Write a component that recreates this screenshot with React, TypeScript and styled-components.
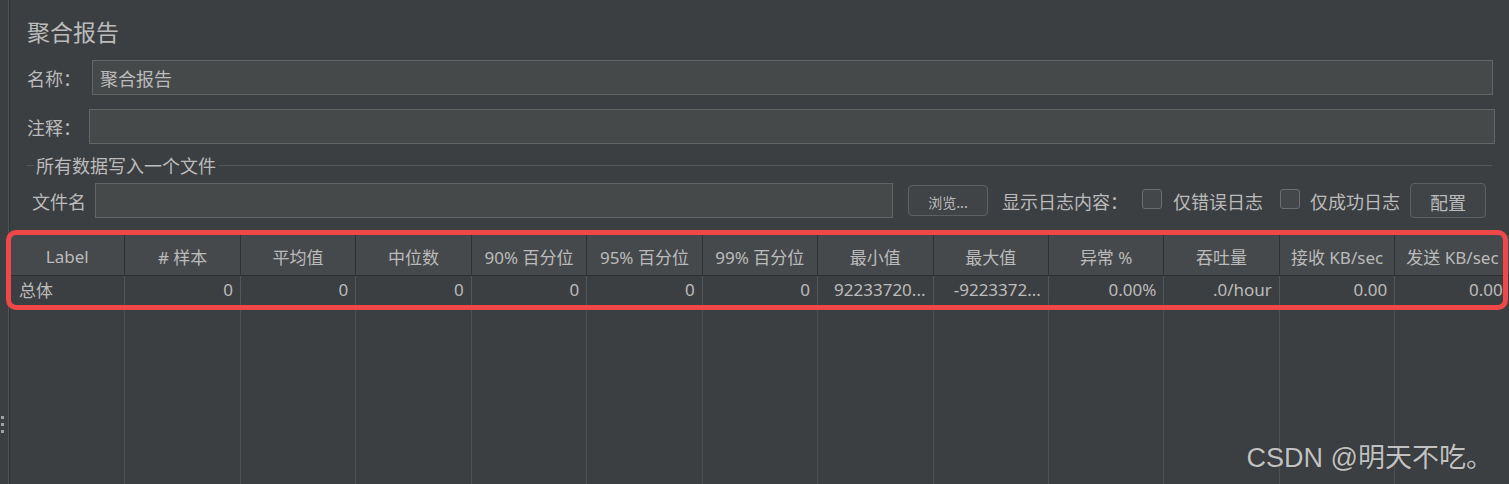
import React from "react";
import styled, { createGlobalStyle } from "styled-components";

const GlobalStyle = createGlobalStyle`
  html, body, #root {
    margin: 0;
    height: 100%;
  }
  body {
    background: #3c3f41;
    overflow: hidden;
    font-family: "Noto Sans", "Noto Sans CJK SC", sans-serif;
  }
`;

const Page = styled.div`
  display: flex;
  height: 100vh;
  width: 100vw;
  background: #3c3f41;
  color: #bbbbbb;
  overflow: hidden;
`;

const SideStrip = styled.div`
  position: relative;
  width: 8px;
  flex: 0 0 8px;
  background: #3c3f41;
  border-right: 1px solid #505356;
`;

const Grip = styled.div`
  position: absolute;
  left: 1px;
  top: 416px;
  display: flex;
  flex-direction: column;
  gap: 4px;
  span {
    width: 3px;
    height: 3px;
    background: #a0a0a0;
  }
`;

const Main = styled.div`
  position: relative;
  flex: 1;
  display: flex;
  flex-direction: column;
  min-width: 0;
  border-left: 1px solid #333537;
`;

const Form = styled.div`
  display: flex;
  flex-direction: column;
  padding: 0 16px 0 17px;
`;

const Title = styled.div`
  margin-top: 15px;
  font-size: 23px;
  line-height: 32px;
  font-family: "Noto Sans CJK SC", sans-serif;
`;

const FieldRow = styled.div<{ $top: number; $labelWidth: number; $right?: number }>`
  display: flex;
  align-items: center;
  margin-top: ${(p) => p.$top}px;
  margin-right: ${(p) => p.$right ?? 0}px;
  label {
    flex: 0 0 ${(p) => p.$labelWidth}px;
    font-size: 18px;
    font-family: "Noto Sans CJK SC", sans-serif;
  }
`;

const TextInput = styled.div<{ $width?: number; $left?: number }>`
  box-sizing: border-box;
  height: 35px;
  ${(p) => (p.$width ? `flex: 0 0 ${p.$width}px;` : "flex: 1;")}
  margin-left: ${(p) => p.$left ?? 0}px;
  background: #45494a;
  border: 1px solid #646464;
  padding: 0 7px;
  display: flex;
  align-items: center;
  font-size: 18px;
  font-family: "Noto Sans CJK SC", sans-serif;
  color: #bbbbbb;
`;

const Section = styled.div`
  display: flex;
  align-items: center;
  margin-top: 11px;
  height: 20px;
  margin-right: 1px;
  &::before {
    content: "";
    width: 7px;
    border-top: 1px solid #55585a;
  }
  &::after {
    content: "";
    flex: 1;
    border-top: 1px solid #55585a;
  }
  span {
    padding: 0 3px 0 2px;
    font-size: 18px;
    font-family: "Noto Sans CJK SC", sans-serif;
  }
`;

const FileRow = styled.div`
  display: flex;
  align-items: center;
  margin-top: 8px;
  height: 35px;
  font-size: 18px;
  font-family: "Noto Sans CJK SC", sans-serif;
`;

const Text = styled.span<{ $left?: number }>`
  margin-left: ${(p) => p.$left ?? 0}px;
  white-space: nowrap;
`;

const Button = styled.div<{ $width: number; $height: number; $size: number; $left: number }>`
  box-sizing: border-box;
  flex: 0 0 ${(p) => p.$width}px;
  height: ${(p) => p.$height}px;
  margin-left: ${(p) => p.$left}px;
  display: flex;
  align-items: center;
  justify-content: center;
  background: #404447;
  border: 1px solid #5e6163;
  border-radius: 4px;
  font-size: ${(p) => p.$size}px;
  padding-top: 2px;
`;

const Checkbox = styled.div<{ $left: number }>`
  box-sizing: border-box;
  flex: 0 0 20px;
  height: 20px;
  margin-left: ${(p) => p.$left}px;
  margin-top: -4px;
  background: #43474a;
  border: 1px solid #6b6e70;
  border-radius: 3px;
`;

const TableArea = styled.div`
  position: relative;
  flex: 1;
  margin-top: 17px;
  display: flex;
  flex-direction: column;
`;

const cols = "repeat(13, 115.45px)";

const HeaderRow = styled.div`
  display: grid;
  grid-template-columns: ${cols};
  height: 40px;
  background: #46494b;
  border-bottom: 1px solid #2c2e30;
`;

const HeadCell = styled.div`
  display: flex;
  align-items: center;
  justify-content: center;
  border-right: 1px solid #2f3234;
  font-size: 17px;
  white-space: nowrap;
  overflow: hidden;
  padding-top: 2px;
`;

const DataRow = styled.div`
  display: grid;
  grid-template-columns: ${cols};
  height: 27px;
`;

const DataCell = styled.div<{ $align: "left" | "right" }>`
  display: flex;
  align-items: center;
  justify-content: ${(p) => (p.$align === "left" ? "flex-start" : "flex-end")};
  padding: 0 7px 0 9px;
  border-right: 1px solid #54575a;
  font-size: 17px;
  white-space: nowrap;
  overflow: hidden;
`;

const FillRow = styled.div`
  flex: 1;
  display: grid;
  grid-template-columns: ${cols};
  div {
    border-right: 1px solid #4d5053;
  }
`;

const Highlight = styled.div`
  position: absolute;
  left: -4px;
  top: -5px;
  width: 1502px;
  height: 80px;
  box-sizing: border-box;
  border: 5px solid #f04848;
  border-radius: 10px;
  pointer-events: none;
`;

const Watermark = styled.div`
  position: absolute;
  right: 16px;
  bottom: 9px;
  font-size: 27px;
  font-family: "Liberation Sans", "Noto Sans CJK SC", sans-serif;
  color: rgba(222, 222, 222, 0.85);
  text-shadow: 0 0 1px rgba(0, 0, 0, 0.3);
`;

const headers = [
  "Label",
  "# 样本",
  "平均值",
  "中位数",
  "90% 百分位",
  "95% 百分位",
  "99% 百分位",
  "最小值",
  "最大值",
  "异常 %",
  "吞吐量",
  "接收 KB/sec",
  "发送 KB/sec",
];

const row = [
  "总体",
  "0",
  "0",
  "0",
  "0",
  "0",
  "0",
  "92233720...",
  "-9223372...",
  "0.00%",
  ".0/hour",
  "0.00",
  "0.00",
];

export default function App() {
  return (
    <Page>
      <GlobalStyle />
      <SideStrip>
        <Grip>
          <span />
          <span />
          <span />
        </Grip>
      </SideStrip>
      <Main>
        <Form>
          <Title>聚合报告</Title>
          <FieldRow $top={13} $labelWidth={65}>
            <label>名称：</label>
            <TextInput>聚合报告</TextInput>
          </FieldRow>
          <FieldRow $top={14} $labelWidth={62} $right={-2}>
            <label>注释：</label>
            <TextInput />
          </FieldRow>
          <Section>
            <span>所有数据写入一个文件</span>
          </Section>
          <FileRow>
            <Text $left={5}>文件名</Text>
            <TextInput $width={798} $left={9} />
            <Button $width={80} $height={31} $size={14} $left={15}>
              浏览...
            </Button>
            <Text $left={14}>显示日志内容：</Text>
            <Checkbox $left={14} />
            <Text $left={11}>仅错误日志</Text>
            <Checkbox $left={17} />
            <Text $left={10}>仅成功日志</Text>
            <Button $width={76} $height={35} $size={18} $left={10}>
              配置
            </Button>
          </FileRow>
        </Form>
        <TableArea>
          <HeaderRow>
            {headers.map((h) => (
              <HeadCell key={h}>{h}</HeadCell>
            ))}
          </HeaderRow>
          <DataRow>
            {row.map((v, i) => (
              <DataCell key={i} $align={i === 0 ? "left" : "right"}>
                {v}
              </DataCell>
            ))}
          </DataRow>
          <FillRow>
            {headers.map((h) => (
              <div key={h} />
            ))}
          </FillRow>
          <Highlight />
        </TableArea>
        <Watermark>CSDN @明天不吃。</Watermark>
      </Main>
    </Page>
  );
}
